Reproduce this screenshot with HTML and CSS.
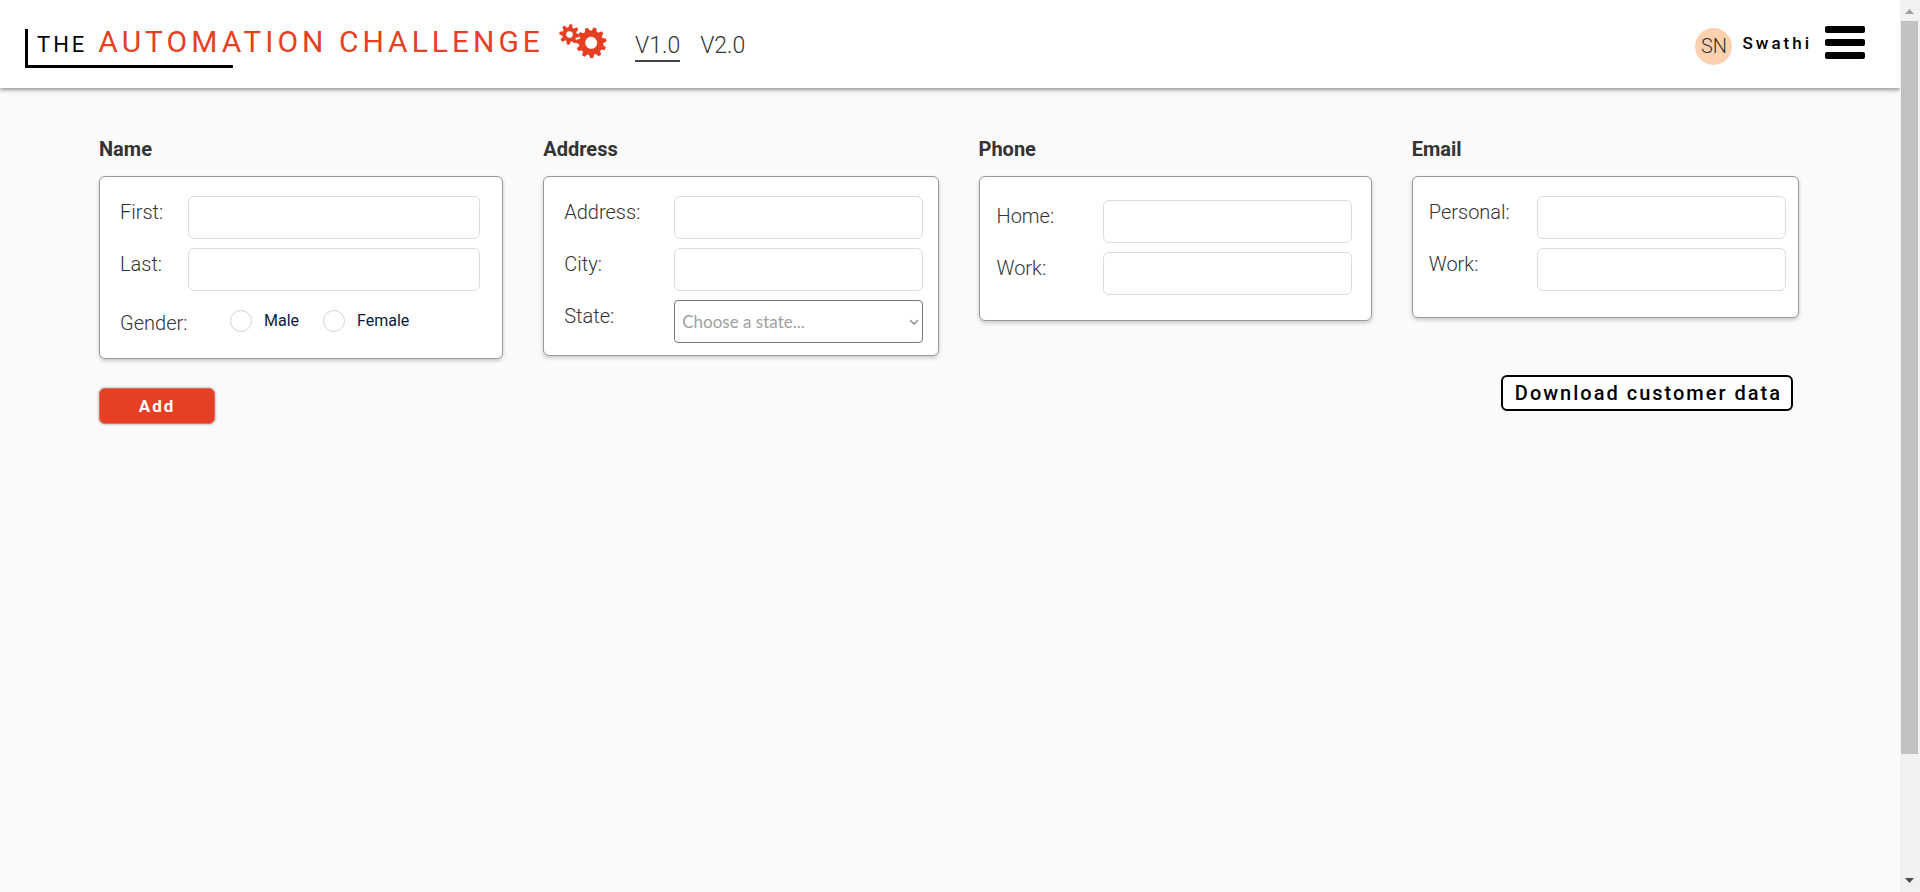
FILE: index.html
```html
<!DOCTYPE html>
<html lang="en">
<head>
<meta charset="utf-8">
<title>The Automation Challenge</title>
<link rel="stylesheet" href="styles.css">
</head>
<body>
<div class="page">
  <header class="header">
    <div class="logo"><span class="logo-the">THE</span><span class="logo-name">AUTOMATION CHALLENGE</span></div>
    <svg class="gears" width="48" height="36" viewBox="0 0 48 36" aria-hidden="true">
      <defs>
        <path id="tooth-s" d="M-2.4-6 -1.3-10.2H1.3L2.4-6Z"/>
        <path id="tooth-l" d="M-2.8-11 -1.5-15.3H1.5L2.8-11Z"/>
      </defs>
      <g transform="translate(10.5 10.5) rotate(8)" fill="#e63f24">
        <circle r="5.2" fill="none" stroke="#e63f24" stroke-width="3.8"/>
        <use href="#tooth-s"/><use href="#tooth-s" transform="rotate(45)"/><use href="#tooth-s" transform="rotate(90)"/><use href="#tooth-s" transform="rotate(135)"/><use href="#tooth-s" transform="rotate(180)"/><use href="#tooth-s" transform="rotate(225)"/><use href="#tooth-s" transform="rotate(270)"/><use href="#tooth-s" transform="rotate(315)"/>
      </g>
      <g transform="translate(32.2 18.8) rotate(178)" fill="#e63f24">
        <circle r="9.1" fill="none" stroke="#e63f24" stroke-width="6.2"/>
        <use href="#tooth-l"/><use href="#tooth-l" transform="rotate(32.73)"/><use href="#tooth-l" transform="rotate(65.45)"/><use href="#tooth-l" transform="rotate(98.18)"/><use href="#tooth-l" transform="rotate(130.91)"/><use href="#tooth-l" transform="rotate(163.64)"/><use href="#tooth-l" transform="rotate(196.36)"/><use href="#tooth-l" transform="rotate(229.09)"/><use href="#tooth-l" transform="rotate(261.82)"/><use href="#tooth-l" transform="rotate(294.55)"/><use href="#tooth-l" transform="rotate(327.27)"/>
      </g>
    </svg>
    <nav class="versions">
      <a class="version current" href="#v1">V1.0</a>
      <a class="version" href="#v2">V2.0</a>
    </nav>
    <div class="user">
      <span class="avatar">SN</span>
      <span class="user-name">Swathi</span>
      <button class="menu" type="button" aria-label="Menu"><span class="bar"></span><span class="bar"></span><span class="bar"></span></button>
    </div>
  </header>
  <main>
    <form class="form">
      <div class="groups">
        <section class="group">
          <h2 class="title">Name</h2>
          <div class="card name">
            <div class="row"><label class="label" for="first">First:</label><input class="field" id="first" type="text"></div>
            <div class="row"><label class="label" for="last">Last:</label><input class="field" id="last" type="text"></div>
            <div class="row gender" role="radiogroup" aria-labelledby="gender">
              <span class="label" id="gender">Gender:</span>
              <label class="option"><input class="radio" type="radio" name="gender">Male</label>
              <label class="option"><input class="radio" type="radio" name="gender">Female</label>
            </div>
          </div>
        </section>
        <section class="group">
          <h2 class="title">Address</h2>
          <div class="card address">
            <div class="row"><label class="label" for="address">Address:</label><input class="field" id="address" type="text"></div>
            <div class="row"><label class="label" for="city">City:</label><input class="field" id="city" type="text"></div>
            <div class="row"><label class="label" for="state">State:</label>
              <div class="select-box">
                <select class="field select" id="state"><option>Choose a state...</option></select>
                <svg class="chevron" width="10" height="7" viewBox="0 0 10 7" aria-hidden="true"><path d="M1.2 1.2 5 5 8.8 1.2" fill="none" stroke="#8b8b8b" stroke-width="1.5"/></svg>
              </div>
            </div>
          </div>
        </section>
        <section class="group">
          <h2 class="title">Phone</h2>
          <div class="card phone">
            <div class="row"><label class="label" for="home-phone">Home:</label><input class="field" id="home-phone" type="tel"></div>
            <div class="row"><label class="label" for="work-phone">Work:</label><input class="field" id="work-phone" type="tel"></div>
          </div>
        </section>
        <section class="group">
          <h2 class="title">Email</h2>
          <div class="card email">
            <div class="row"><label class="label" for="personal-email">Personal:</label><input class="field" id="personal-email" type="email"></div>
            <div class="row"><label class="label" for="work-email">Work:</label><input class="field" id="work-email" type="email"></div>
          </div>
        </section>
      </div>
      <div class="actions">
        <button class="add" type="button">Add</button>
        <button class="download" type="button">Download customer data</button>
      </div>
    </form>
  </main>
</div>
<div class="scrollbar" aria-hidden="true">
  <svg class="arrow" width="20" height="21" viewBox="0 0 20 21"><path d="M5 14 9.5 9 14 14Z" fill="#a0a0a0"/></svg>
  <div class="thumb"></div>
  <div class="rest"></div>
  <svg class="arrow" width="20" height="21" viewBox="0 0 20 21"><path d="M5 7H14L9.5 12Z" fill="#4d4d4d"/></svg>
</div>
</body>
</html>
```

FILE: styles.css
```css
* { box-sizing: border-box; }

body {
  margin: 0;
  display: flex;
  min-height: 100vh;
  background: #fafafa;
  color: #333;
  font-family: Roboto, "Liberation Sans", sans-serif;
}

.page { flex: 1; min-width: 0; }

.header {
  display: flex;
  align-items: flex-start;
  min-height: 88px;
  padding: 24px 35px 20px 25px;
  background: #fff;
  box-shadow: 0 2px 4px rgba(0, 0, 0, 0.4);
}

.logo {
  display: flex;
  align-items: baseline;
  gap: 11px;
  height: 39px;
  margin-top: 5px;
  padding-left: 9px;
  border-left: 3px solid #000;
  background: linear-gradient(#000, #000) left bottom / 205px 3px no-repeat;
  line-height: 26px;
  white-space: nowrap;
}

.logo-the { color: #000; font-size: 22px; letter-spacing: 3px; }
.logo-name { color: #e63f24; font-size: 30px; letter-spacing: 4px; }

.gears { margin-left: 15px; }

.versions { display: flex; gap: 20px; margin: 8px 0 0 28px; }

.version {
  color: #333;
  font-size: 23px;
  font-weight: 300;
  line-height: 28px;
  text-decoration: none;
}

.current { border-bottom: 2px solid #444; }

.user { display: flex; align-items: flex-start; margin-left: auto; }

.avatar {
  width: 37px;
  height: 37px;
  margin-top: 4px;
  border-radius: 50%;
  background: #fdd0b0;
  font-size: 20px;
  font-weight: 300;
  line-height: 37px;
  text-align: center;
}

.user-name {
  margin: 8px 13px 0 10px;
  color: #000;
  font-size: 17px;
  font-weight: 500;
  letter-spacing: 3px;
  line-height: 22px;
}

.menu {
  display: flex;
  flex-direction: column;
  gap: 6px;
  width: 40px;
  margin-top: 2px;
  padding: 0;
  border: 0;
  background: none;
}

.bar { height: 7px; border-radius: 2px; background: #000; width: 100%; }

.form { padding: 48px 101px 0 99px; }

.groups {
  display: grid;
  grid-template-columns: 404fr 395fr 393fr 387fr;
  gap: 40px;
  align-items: start;
}

.title {
  margin: 0 0 14px;
  font-size: 20px;
  font-weight: 700;
  line-height: 26px;
}

.card {
  display: grid;
  gap: 9px;
  border: 1px solid #999;
  border-radius: 6px;
  background: #fff;
  box-shadow: 0 2px 4px rgba(0, 0, 0, 0.2);
}

.name { padding: 19px 22px 12px 20px; }
.address { padding: 19px 15px 12px 20px; }
.phone { padding: 23px 19px 25px 17px; }
.email { padding: 19px 12px 26px 16px; }

.row { display: grid; align-items: start; }
.name .row { grid-template-columns: 68px 1fr; }
.address .row { grid-template-columns: 110px 1fr; }
.phone .row { grid-template-columns: 106px 1fr; }
.email .row { grid-template-columns: 108px 1fr; }
.name .gender { display: flex; align-items: center; min-height: 46px; }
.gender .label { width: 110px; padding: 0; }

.label {
  padding-top: 4px;
  font-size: 20px;
  font-weight: 300;
  line-height: 24px;
}

.field {
  display: block;
  width: 100%;
  height: 43px;
  padding: 0 12px;
  border: 1px solid #dcdcdc;
  border-radius: 6px;
  background: #fff;
}

.select-box { position: relative; }

.select {
  appearance: none;
  padding: 0 7px;
  border-color: #777;
  border-radius: 4px;
  color: #a0a0a0;
  font: 17px Lato, sans-serif;
}

.chevron { position: absolute; right: 4px; top: 19px; pointer-events: none; }

.option {
  display: flex;
  align-items: center;
  gap: 12px;
  margin: 0 24px 4px 0;
  color: #0b1a40;
  font-size: 16px;
  line-height: 22px;
}

.radio {
  appearance: none;
  width: 22px;
  height: 22px;
  margin: 0;
  border: 1px solid #d4d4d5;
  border-radius: 50%;
  background: #fff;
}

.actions {
  display: flex;
  justify-content: space-between;
  align-items: flex-start;
  padding: 16px 6px 0 0;
}

.add,
.download {
  min-height: 36px;
  border-radius: 6px;
  font-family: inherit;
}

.add {
  width: 116px;
  margin-top: 13px;
  border: 1px solid #d9705f;
  background: #e63f24;
  box-shadow: 0 0 3px rgba(0, 0, 0, 0.4);
  color: #fff;
  font-size: 17px;
  font-weight: 700;
  letter-spacing: 2px;
}

.download {
  padding: 0 9px 0 12px;
  border: 2px solid #000;
  background: #fff;
  color: #000;
  font-size: 20px;
  font-weight: 500;
  letter-spacing: 2px;
}

.scrollbar {
  display: flex;
  flex-direction: column;
  position: sticky;
  top: 0;
  width: 20px;
  height: 100vh;
  padding: 0 2px 0 1px;
  background: #f1f1f1;
}

.arrow { display: block; flex: none; margin-left: -1px; }
.thumb { flex: 733; background: #c1c1c1; }
.rest { flex: 117; }
```
